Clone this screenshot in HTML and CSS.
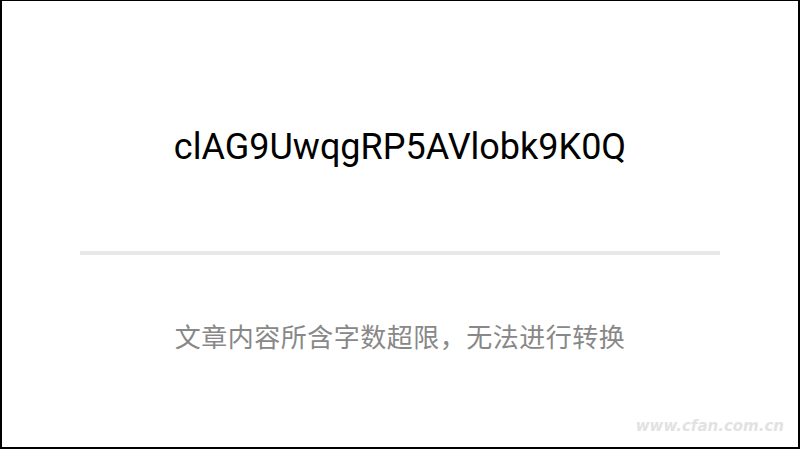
FILE: index.html
```html
<!DOCTYPE html>
<html>
<head>
    <link rel="stylesheet" href="styles.css">
</head>
<body>
    <div class="frame">
        <div class="codebox">
            <div class="code">clAG9UwqgRP5AVlobk9K0Q</div>
        </div>
        <div class="divider"></div>
        <div class="msg">文章内容所含字数超限，无法进行转换</div>
        <div class="mark">www.cfan.com.cn</div>
    </div>
</body>
</html>
```

FILE: styles.css
```css
*{
    margin: 0;
    padding: 0;
    box-sizing: border-box;
}
body {
    font-family: Roboto, "Noto Sans CJK SC", sans-serif;
    background-color: #fff;
}
.frame{
    width: 800px;
    height: 449px;
    border: 2px solid #000;
    border-top-width: 1px;
    display: flex;
    flex-direction: column;
    align-items: center;
    position: relative;
}
.codebox{
    height: 250px;
    display: flex;
    align-items: center;
    padding-top: 42px;
}
.code{
    font-size: 36px;
    color: #000;
}
.divider{
    width: 640px;
    height: 4px;
    background-color: #e8e8e8;
}
.msg{
    margin-top: 62px;
    font-size: 26px;
    color: #888;
    letter-spacing: 0.5px;
}
.mark{
    position: absolute;
    right: 14px;
    bottom: 12px;
    font-family: "DejaVu Sans", sans-serif;
    font-style: italic;
    font-weight: bold;
    font-size: 15px;
    color: #e2e2e2;
}
```
